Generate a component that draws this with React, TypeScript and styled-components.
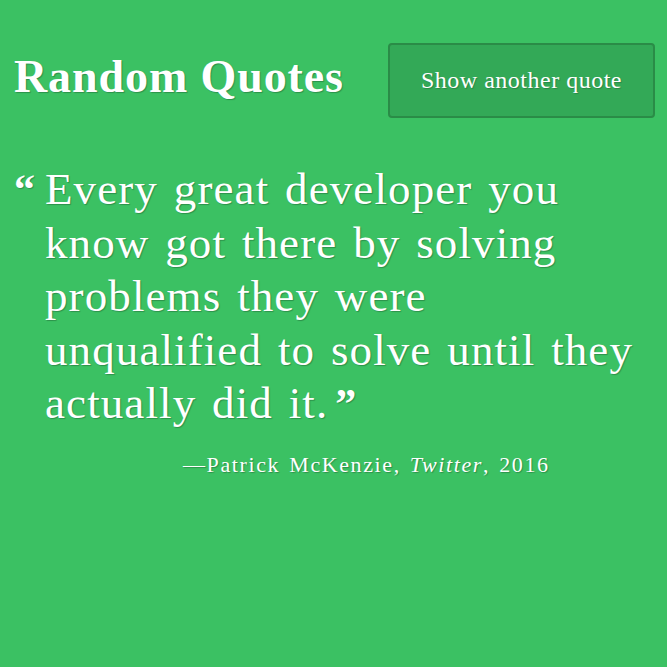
import React from "react";
import styled, { createGlobalStyle } from "styled-components";

const Global = createGlobalStyle`
  html, body { margin: 0; padding: 0; background: #3bc163; }
  body { font-family: "Liberation Serif", "DejaVu Serif", serif; color: #fff; }
`;

const Page = styled.div`
  width: 667px;
  height: 667px;
  box-sizing: border-box;
  padding: 43px 12px 0 14px;
  text-shadow: 1px 1px 1px rgba(0, 0, 0, 0.25);
`;

const Header = styled.header`
  display: flex;
  justify-content: space-between;
  align-items: center;
`;

const Title = styled.h1`
  margin: 0 0 8px 0;
  font-size: 46px;
  line-height: 1;
  font-weight: 700;
  letter-spacing: 0.9px;
`;

const Button = styled.button`
  width: 267px;
  height: 75px;
  box-sizing: border-box;
  background: #33a957;
  border: 2px solid #2a8c47;
  border-radius: 4px;
  color: #fff;
  font-family: inherit;
  font-size: 24px;
  letter-spacing: 0.5px;
  text-shadow: 1px 1px 1px rgba(0, 0, 0, 0.2);
  cursor: pointer;
`;

const QuoteRow = styled.blockquote`
  display: flex;
  margin: 45px 0 0 0;
`;

const Mark = styled.span`
  width: 31px;
  flex: none;
  font-size: 42px;
  line-height: 53.5px;
  font-weight: 700;
`;

const QuoteText = styled.p`
  margin: 0;
  font-size: 45px;
  line-height: 53.5px;
  width: 604px;
  letter-spacing: 1.1px;
  word-spacing: 3.5px;
`;

const Close = styled.span`
  font-size: 42px;
  font-weight: 700;
  margin-left: 7px;
  letter-spacing: 0;
`;

const Cite = styled.footer`
  margin-top: 20px;
  padding-left: 169px;
  font-size: 22px;
  line-height: 26px;
  letter-spacing: 1.6px;
  word-spacing: 2px;
`;

export default function App() {
  return (
    <>
      <Global />
      <Page>
        <Header>
          <Title>Random Quotes</Title>
          <Button>Show another quote</Button>
        </Header>
        <QuoteRow>
          <Mark>“</Mark>
          <QuoteText>
            Every great developer you know got there by solving problems they were
            unqualified to solve until they actually did it.<Close>”</Close>
          </QuoteText>
        </QuoteRow>
        <Cite>
          —Patrick McKenzie, <i>Twitter</i>, 2016
        </Cite>
      </Page>
    </>
  );
}
